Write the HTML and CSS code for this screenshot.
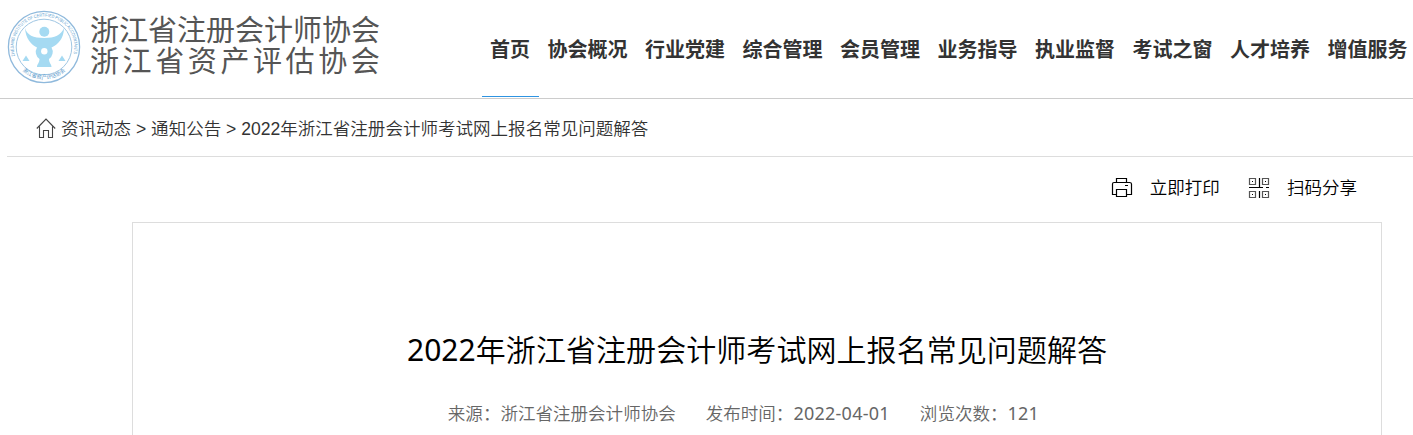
FILE: index.html
```
<!DOCTYPE html>
<html lang="zh-CN">
<head>
    <meta charset="utf-8">
    <title>2022年浙江省注册会计师考试网上报名常见问题解答</title>
    <link rel="stylesheet" href="styles.css">
</head>
<body>
    <div class="header">
        <a class="logo">
            <svg class="logo-mark" viewBox="0 0 74 74">
                <defs>
                    <path id="ringTop" d="M8.1 46 A30.3 30.3 0 1 1 65.9 46"/>
                    <path id="ringBottom" d="M10 54.5 A32.4 32.4 0 0 0 64 54.5"/>
                </defs>
                <circle cx="37" cy="37" r="35.6" fill="none" stroke="#8fb9dc" stroke-width="1.3"/>
                <circle cx="37" cy="37" r="27.8" fill="none" stroke="#9fc6e3" stroke-width="1"/>
                <text class="ring-en"><textPath href="#ringTop" textLength="111" lengthAdjust="spacingAndGlyphs">ZHEJIANG INSTITUTE OF CERTIFIED PUBLIC ACCOUNTANTS</textPath></text>
                <text class="ring-cn"><textPath href="#ringBottom" startOffset="50%" text-anchor="middle">浙江省资产评估协会</textPath></text>
                <g fill="#a5daf2">
                    <circle cx="37.3" cy="21.7" r="5"/>
                    <path d="M18 18 C20 25 26 28 37.3 28 C48 28 54 25 57 18 C57 28 51 35 44.5 37.5 A8.6 8.6 0 0 1 42 49 C42 53 44.5 54 44.5 57 H30 C30 54 32.5 53 32.5 49 A8.6 8.6 0 0 1 30 37.5 C24 35 18.5 28 18 18 Z"/>
                    <path d="M15.5 51 L19 45.5 L22.5 51 Z M51.5 51 L55 45.5 L58.5 51 Z"/>
                </g>
                <circle cx="37.3" cy="41.3" r="3.2" fill="#fff"/>
            </svg>
            <span class="logo-text">
                <span class="name-cpa">浙江省注册会计师协会</span>
                <span class="name-pg">浙江省资产评估协会</span>
            </span>
        </a>
        <div class="nav">
            <a class="on">首页</a>
            <a>协会概况</a>
            <a>行业党建</a>
            <a>综合管理</a>
            <a>会员管理</a>
            <a>业务指导</a>
            <a>执业监督</a>
            <a>考试之窗</a>
            <a>人才培养</a>
            <a>增值服务</a>
        </div>
    </div>

    <div class="crumbs">
        <svg class="home" viewBox="0 0 20 20">
            <path d="M.8 10.5 L10 1 L19.2 10.5 M3.5 8.5 V19.5 H7.5 V12.5 H12.5 V19.5 H16.5 V8.5"/>
        </svg>
        <span>资讯动态 &gt; 通知公告 &gt; 2022年浙江省注册会计师考试网上报名常见问题解答</span>
    </div>

    <div class="tools">
        <a class="tool">
            <svg viewBox="0 0 22 22">
                <path d="M5.5 5 V1.5 H15.5 V5 M5.5 17.5 H1.5 V7 Q1.5 5.5 3 5.5 H18.5 Q20.5 5.5 20.5 7 V17.5 H15.5 M5.5 12.5 H15.5 V19.5 H5.5 Z M14 8.5 H17"/>
            </svg>
            <span>立即打印</span>
        </a>
        <a class="tool">
            <svg viewBox="0 0 22 22">
                <path class="thin" d="M1.5 1.5 H7.5 V7.5 H1.5 Z M14.5 1.5 H20.5 V7.5 H14.5 Z M1.5 14.5 H7.5 V20.5 H1.5 Z M14.5 14.5 H20.5 V20.5 H14.5 Z"/>
                <path d="M11.5 1 V11 M1 10.5 H15 M18 10.5 H21 M11.5 14 V21 M4 4.5 H5 M17 4.5 H18 M4 17.5 H5 M17 17.5 H18"/>
            </svg>
            <span>扫码分享</span>
        </a>
    </div>

    <div class="article">
        <h1><i>2022</i>年浙江省注册会计师考试网上报名常见问题解答</h1>
        <div class="meta">
            <span>来源：浙江省注册会计师协会</span>
            <span>发布时间：<i>2022-04-01</i></span>
            <span>浏览次数：<i>121</i></span>
        </div>
    </div>
</body>
</html>
```
FILE: styles.css
```
html, body {
    margin: 0;
    background: #fff;
}

body {
    font-family: "Liberation Sans", "Noto Sans CJK SC", sans-serif;
    font-size: 17.55px;
    font-weight: 350;
    color: #333;
}

/* header */
.header {
    display: flex;
    height: 98px;
    border-bottom: 1px solid #ccc;
}

.logo {
    display: flex;
    width: 482px;
    padding: 10px 0 0 7px;
    box-sizing: border-box;
    flex: none;
}

.logo-mark {
    width: 74px;
    height: 74px;
}

.ring-en {
    font: 4.6px "Liberation Sans", sans-serif;
    fill: #5f9fd0;
}

.ring-cn {
    font: 5.2px "Liberation Sans", "Noto Sans CJK SC", sans-serif;
    fill: #4f93c8;
}

.logo-text {
    display: flex;
    flex-direction: column;
    padding: 6px 0 0 9px;
    font-size: 29px;
    font-weight: 400;
    line-height: 31px;
    color: #555;
    white-space: nowrap;
}

.name-pg {
    letter-spacing: 3.6px;
}

.nav {
    display: flex;
    gap: .5px;
    font-family: "Noto Sans CJK SC", sans-serif;
    font-size: 20px;
    font-weight: bold;
}

.nav a {
    height: 96px;
    padding: 0 9px 0 8px;
    line-height: 97px;
    white-space: nowrap;
    border-bottom: 1px solid transparent;
}

.nav .on {
    border-color: #2e94e2;
}

/* breadcrumb */
.crumbs {
    display: flex;
    align-items: center;
    height: 57px;
    margin-left: 7px;
    padding-left: 29px;
    border-bottom: 1px solid #ddd;
    white-space: nowrap;
}

.home {
    width: 20px;
    height: 20px;
    margin-right: 5px;
    fill: none;
    stroke: #444;
    stroke-width: 1.1;
}

/* print / share */
.tools {
    display: flex;
    justify-content: flex-end;
    gap: 28px;
    height: 65px;
    padding-right: 56px;
    color: #000;
}

.tool {
    display: flex;
    align-items: center;
    height: 62px;
}

.tool span {
    padding-bottom: 3px;
}

.tool svg {
    width: 22px;
    height: 22px;
    margin-right: 17px;
    fill: none;
    stroke: #000;
    stroke-width: 1.2;
}

.tool .thin {
    stroke: #555;
}

/* article */
.article {
    height: 212px;
    margin: 0 31px 0 132px;
    border: 1px solid #ddd;
    border-bottom: 0;
    text-align: center;
}

.article i {
    font-family: "Noto Sans", sans-serif;
    font-style: normal;
    font-weight: 400;
    line-height: 1;
}

.article h1 {
    margin: 0;
    padding-top: 104px;
    font-family: "Noto Sans", "Noto Sans CJK SC", sans-serif;
    font-size: 30px;
    font-weight: 350;
    line-height: 46px;
    letter-spacing: .06px;
    color: #000;
}

.meta {
    display: flex;
    justify-content: center;
    gap: 30px;
    margin-top: 28px;
    padding-right: 27px;
    line-height: 26px;
    color: #666;
}

.meta i {
    font-size: 18px;
    letter-spacing: .25px;
}
```
